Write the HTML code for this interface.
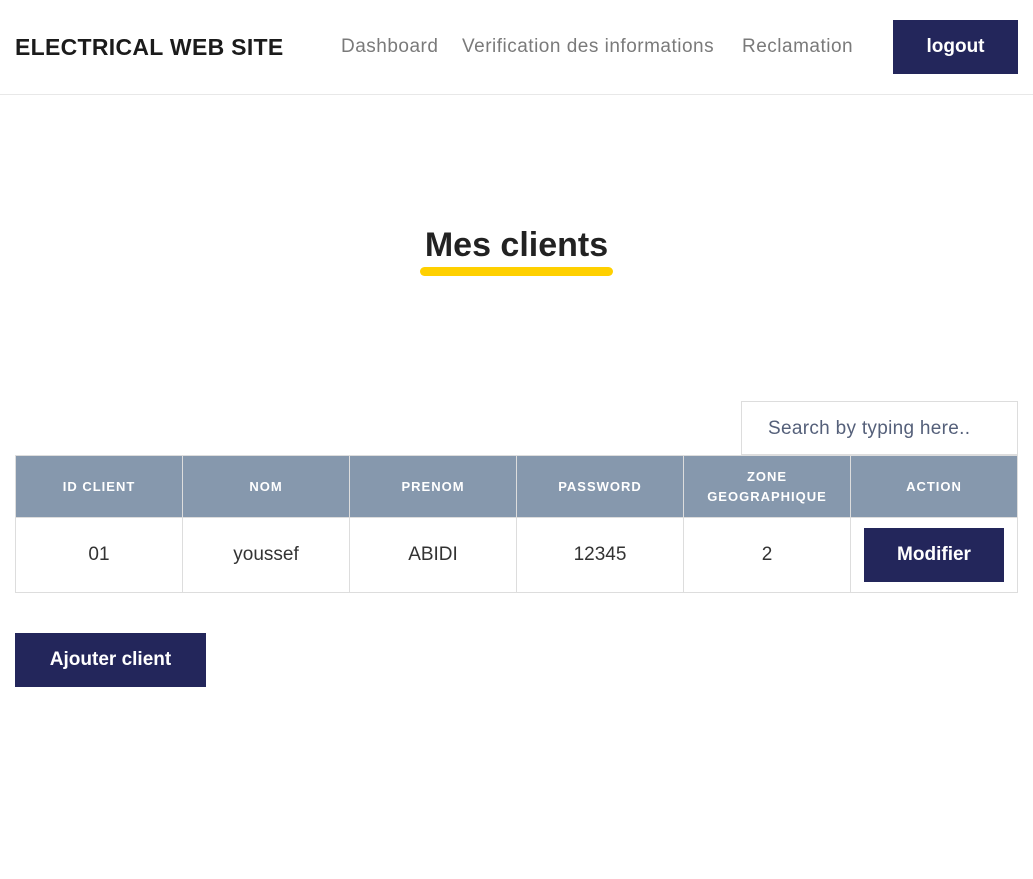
<!DOCTYPE html>
<html><head><style>
*{margin:0;padding:0;box-sizing:border-box}
body{width:1033px;height:879px;background:#fff;font-family:"Liberation Sans",sans-serif;position:relative;overflow:hidden;color:#222}
.hdr{position:absolute;left:0;top:0;width:1033px;height:95px;border-bottom:1px solid #e8e8e8}
.logo{position:absolute;left:15px;top:34px;font-size:23px;font-weight:bold;color:#1b1b1b;letter-spacing:0.3px}
.nav{position:absolute;top:36px;font-size:19px;color:#7a7a7a;letter-spacing:0.5px}
.btn{position:absolute;background:#23265b;color:#fff;font-weight:bold;display:flex;align-items:center;justify-content:center;font-size:19px}
h1{position:absolute;left:0;width:1033px;top:226px;text-align:center;font-size:34px;font-weight:bold;color:#222}
.ul{position:absolute;left:420px;top:267px;width:193px;height:9px;background:#ffd000;border-radius:5px}
.search{position:absolute;left:741px;top:401px;width:277px;height:54px;border:1px solid #ddd;font-size:19px;color:#55607a;padding:16px 0 0 26px;letter-spacing:0.3px}
table{position:absolute;left:15px;top:455px;border-collapse:collapse;width:1003px;table-layout:fixed}
th{background:#8698ad;color:#fff;font-size:13px;letter-spacing:1px;height:62px;border:1px solid #ddd;line-height:20px}
td{height:75px;border:1px solid #ddd;text-align:center;font-size:19px;color:#333}
</style></head><body>
<div class="hdr">
<div class="logo">ELECTRICAL WEB SITE</div>
<div class="nav" style="left:341px">Dashboard</div>
<div class="nav" style="left:462px">Verification des informations</div>
<div class="nav" style="left:742px">Reclamation</div>
<div class="btn" style="left:893px;top:20px;width:125px;height:54px">logout</div>
</div>
<h1>Mes clients</h1>
<div class="ul"></div>
<div class="search">Search by typing here..</div>
<table>
<tr><th>ID CLIENT</th><th>NOM</th><th>PRENOM</th><th>PASSWORD</th><th>ZONE<br>GEOGRAPHIQUE</th><th>ACTION</th></tr>
<tr><td>01</td><td>youssef</td><td>ABIDI</td><td>12345</td><td>2</td><td style="position:relative"><div class="btn" style="left:13px;top:10px;width:140px;height:54px">Modifier</div></td></tr>
</table>
<div class="btn" style="left:15px;top:633px;width:191px;height:54px">Ajouter client</div>
</body></html>
